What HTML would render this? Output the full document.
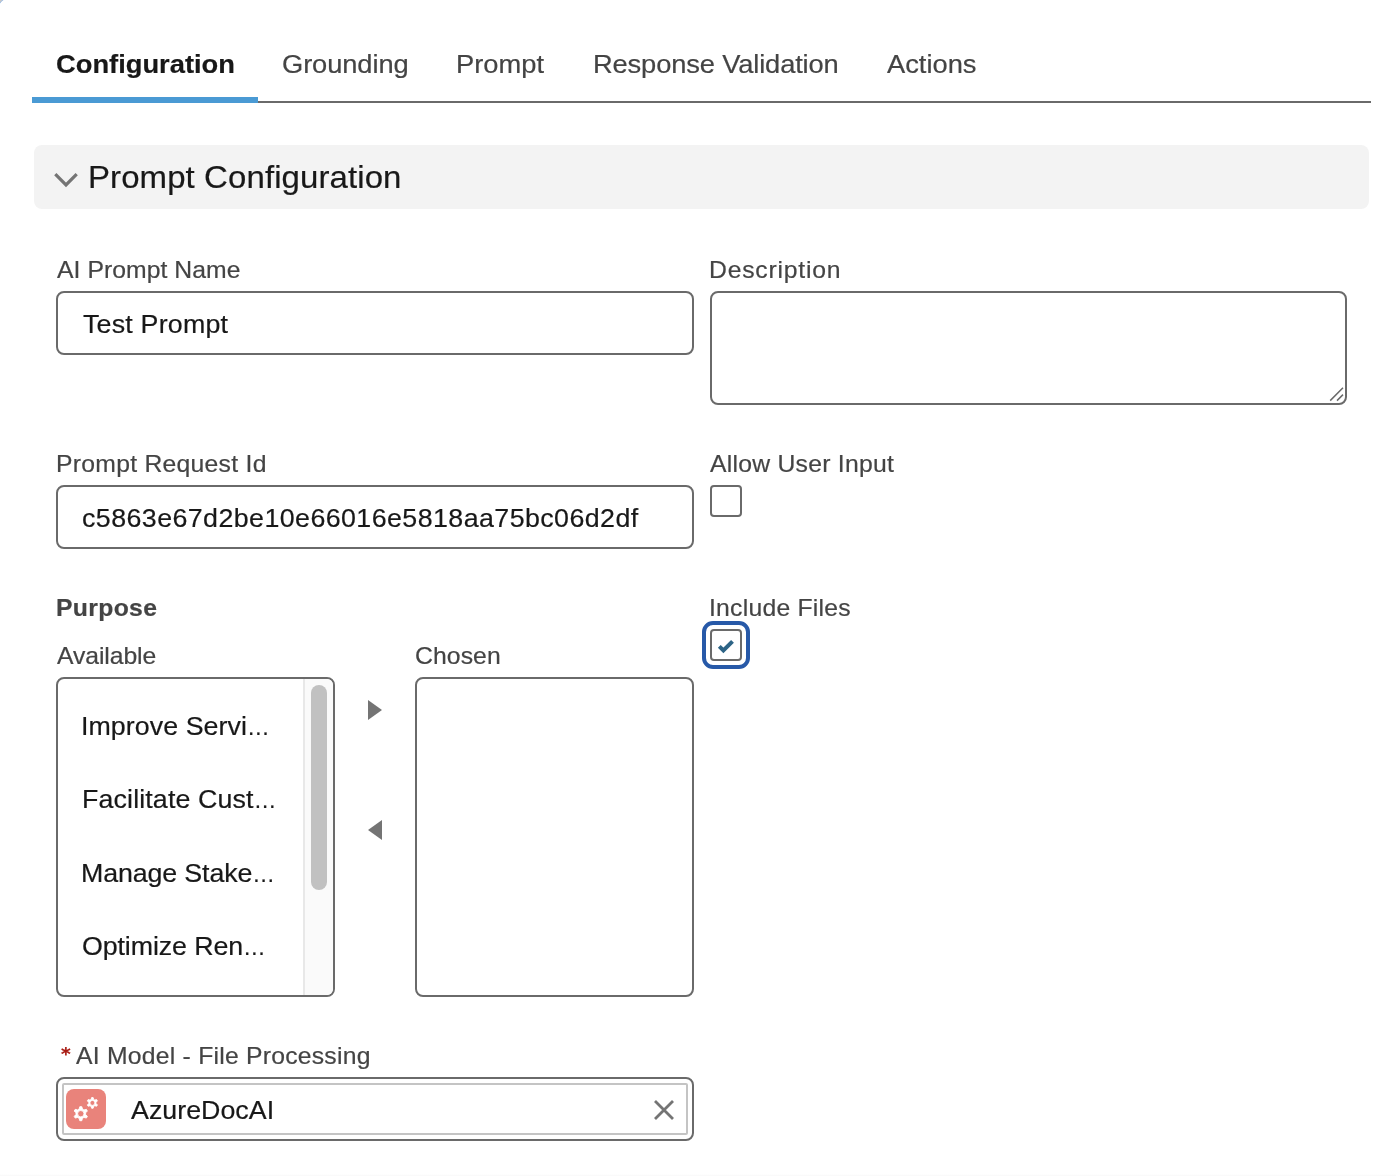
<!DOCTYPE html>
<html lang="en">
<head>
<meta charset="utf-8">
<title>Prompt Configuration</title>
<style>
  * { box-sizing: border-box; margin: 0; padding: 0; }
  html, body { width: 1396px; height: 1176px; background: #fff; overflow: hidden; }
  body { position: relative; font-family: "Liberation Sans", sans-serif; color: #181818; font-size: 26px; }
  .t, .tab a, .section-h h3, .input .v, .listbox li { will-change: transform; transform: scaleX(1.03); transform-origin: 0 50%; -webkit-text-stroke: 0.2px currentColor; }
  .abs { position: absolute; }
  .t { position: absolute; white-space: nowrap; line-height: 1; }

  /* tabs */
  .tabs { position: absolute; left: 32px; top: 26px; width: 1339px; height: 77px; border-bottom: 2px solid #6a6a6a; list-style: none; }
  .tab { position: absolute; top: 0; height: 77px; font-size: 26.5px; color: #444; }
  .tab.active { color: #181818; font-weight: bold; }
  .tab.active::after { content: ""; position: absolute; left: 0; right: 0; bottom: 0; height: 6px; background: #4a9ad4; }
  .tab a { position: absolute; left: 24px; top: 25px; line-height: 1; white-space: nowrap; color: inherit; text-decoration: none; }

  /* section */
  .section-h { position: absolute; left: 34px; top: 145px; width: 1335px; height: 64px; background: #f3f3f3; border-radius: 8px; }
  .section-h h3 { position: absolute; left: 55px; top: 16px; font-size: 32px; font-weight: normal; line-height: 1; white-space: nowrap; color: #181818; }
  .section-h svg { position: absolute; left: 19px; top: 27px; }

  label.t, .lbl { font-size: 24px; color: #444; }
  .input { position: absolute; border: 2px solid #6a6a6a; border-radius: 8px; background: #fff; }
  .input .v { position: absolute; left: 24px; top: 18px; font-size: 26px; line-height: 1; white-space: nowrap; color: #181818; }

  .cb { position: absolute; width: 32px; height: 32px; border: 2px solid #6a6a6a; border-radius: 4px; background: #fff; }
  .ring { position: absolute; width: 48px; height: 48px; border: 4px solid #2759a8; border-radius: 11px; }

  .listbox { position: absolute; border: 2px solid #6a6a6a; border-radius: 8px; background: #fff; overflow: hidden; }
  .listbox ul { list-style: none; }
  .listbox li { position: absolute; left: 24px; font-size: 26px; line-height: 1; white-space: nowrap; color: #181818; }
  .el { font-size: 22px; letter-spacing: 0; }
  .sb-track { position: absolute; right: 0; top: 0; bottom: 0; width: 30px; background: #fafafa; border-left: 2px solid #e8e8e8; }
  .sb-thumb { position: absolute; left: 6px; top: 6px; width: 16px; height: 205px; border-radius: 8px; background: #c1c1c1; }
</style>
</head>
<body>

<ul class="tabs" role="tablist">
  <li class="tab active" style="left:0;width:226px" role="tab"><a id="t1" style="letter-spacing:0.00px">Configuration</a></li>
  <li class="tab" style="left:226px;width:174px" role="tab"><a id="t2" style="letter-spacing:-0.10px">Grounding</a></li>
  <li class="tab" style="left:400px;width:137px" role="tab"><a id="t3" style="letter-spacing:0.00px">Prompt</a></li>
  <li class="tab" style="left:537px;width:293px" role="tab"><a id="t4" style="letter-spacing:-0.14px">Response Validation</a></li>
  <li class="tab" style="left:830px;width:140px" role="tab"><a id="t5" style="letter-spacing:0.00px;left:24.8px">Actions</a></li>
</ul>

<div class="section-h">
  <svg width="26" height="17" viewBox="0 0 26 17"><polyline points="2.3,2.2 13,12.9 23.7,2.2" fill="none" stroke="#747474" stroke-width="3.2" stroke-linejoin="miter"/></svg>
  <h3 id="sh" style="letter-spacing:0.10px;left:54.3px">Prompt Configuration</h3>
</div>

<!-- row 1 -->
<label class="t" id="l1" style="letter-spacing:0.05px;left:57.2px;top:258px">AI Prompt Name</label>
<div class="input" style="left:56px;top:291px;width:638px;height:64px"><span class="v" id="v1" style="letter-spacing:0.20px;left:25px">Test Prompt</span></div>

<label class="t" id="l2" style="letter-spacing:0.77px;left:708.7px;top:258px">Description</label>
<div class="input" style="left:710px;top:291px;width:637px;height:114px">
  <svg class="abs" style="right:-2px;bottom:-2px" width="22" height="22" viewBox="0 0 22 22"><path d="M5.2 17.6 L18 4.8 M12 17.6 L18 11.6" stroke="#6a6a6a" stroke-width="1.5" fill="none"/></svg>
</div>

<!-- row 2 -->
<label class="t" id="l3" style="letter-spacing:0.26px;left:55.6px;top:452px">Prompt Request Id</label>
<div class="input" style="left:56px;top:485px;width:638px;height:64px"><span class="v" id="v2" style="letter-spacing:0.42px">c5863e67d2be10e66016e5818aa75bc06d2df</span></div>

<label class="t" id="l4" style="letter-spacing:0.25px;left:710.3px;top:452px">Allow User Input</label>
<span class="cb" style="left:710px;top:485px"></span>

<!-- row 3 -->
<span class="t lbl" id="l5" style="letter-spacing:0.33px;left:55.6px;top:596px;font-weight:bold">Purpose</span>
<span class="t lbl" id="l6" style="letter-spacing:-0.08px;left:57.2px;top:644px">Available</span>
<span class="t lbl" id="l7" style="letter-spacing:0.10px;left:415.1px;top:644px">Chosen</span>

<div class="listbox" style="left:56px;top:677px;width:279px;height:320px">
 <ul role="listbox">
  <li id="o1" style="top:34px;left:22.9px;letter-spacing:0.06px">Improve Servi<span class="el">…</span></li>
  <li id="o2" style="top:107px;left:23.6px;letter-spacing:0.13px">Facilitate Cust<span class="el">…</span></li>
  <li id="o3" style="top:181px;left:23.3px;letter-spacing:-0.12px">Manage Stake<span class="el">…</span></li>
  <li id="o4" style="top:254px;left:23.9px;letter-spacing:-0.10px">Optimize Ren<span class="el">…</span></li>
 </ul>
  <div class="sb-track"><div class="sb-thumb"></div></div>
</div>

<svg class="abs" style="left:368px;top:700px" width="14" height="20" viewBox="0 0 14 20"><polygon points="0,0 14,10 0,20" fill="#747474"/></svg>
<svg class="abs" style="left:368px;top:820px" width="14" height="20" viewBox="0 0 14 20"><polygon points="14,0 0,10 14,20" fill="#747474"/></svg>

<div class="listbox" style="left:415px;top:677px;width:279px;height:320px"><ul role="listbox"></ul></div>

<label class="t" id="l8" style="letter-spacing:0.23px;left:709.2px;top:596px">Include Files</label>
<span class="ring" style="left:702px;top:621px"></span>
<span class="cb" style="left:710px;top:629px">
  <svg class="abs" style="left:-2px;top:-2px" width="32" height="32" viewBox="0 0 32 32"><polyline points="9.3,17.3 13.4,21.4 22.5,12.3" fill="none" stroke="#2d6486" stroke-width="4"/></svg>
</span>

<!-- row 4 -->
<abbr class="t" title="required" style="left:60.7px;top:1044.6px;font-family:'DejaVu Sans',sans-serif;font-weight:bold;font-size:18px;color:#a81a12;text-decoration:none" id="star">*</abbr>
<label class="t" id="l9" style="letter-spacing:0.23px;left:76.3px;top:1044px">AI Model - File Processing</label>
<div class="input" style="left:56px;top:1077px;width:638px;height:64px">
  <div class="abs" style="left:4px;top:4px;width:626px;height:52px;border:2px solid #c4c4c4;border-radius:2px"></div>
  <svg class="abs" style="left:8px;top:10px" width="40" height="40" viewBox="0 0 40 40"><rect width="40" height="40" rx="8" fill="#e9837b"/><path d="M16.48 20.10 L15.79 17.67 L13.81 17.67 L13.12 20.10 L11.65 20.95 L9.21 20.33 L8.22 22.04 L9.97 23.85 L9.97 25.55 L8.22 27.36 L9.21 29.07 L11.65 28.45 L13.12 29.30 L13.81 31.73 L15.79 31.73 L16.48 29.30 L17.95 28.45 L20.39 29.07 L21.38 27.36 L19.63 25.55 L19.63 23.85 L21.38 22.04 L20.39 20.33 L17.95 20.95 Z M11.60 24.70 a3.2 3.2 0 1 0 6.4 0 a3.2 3.2 0 1 0 -6.4 0 Z M27.67 10.42 L27.15 8.55 L25.65 8.55 L25.13 10.42 L24.02 11.07 L22.14 10.58 L21.39 11.88 L22.76 13.26 L22.76 14.54 L21.39 15.92 L22.14 17.22 L24.02 16.73 L25.13 17.38 L25.65 19.25 L27.15 19.25 L27.67 17.38 L28.78 16.73 L30.66 17.22 L31.41 15.92 L30.04 14.54 L30.04 13.26 L31.41 11.88 L30.66 10.58 L28.78 11.07 Z M23.90 13.90 a2.5 2.5 0 1 0 5.0 0 a2.5 2.5 0 1 0 -5.0 0 Z" fill="#fff" fill-rule="evenodd" stroke="#fff" stroke-width="0.9" stroke-linejoin="round"/></svg>
  <span class="t" id="v3" style="letter-spacing:0.02px;left:72.7px;top:18px;font-size:26px;color:#181818">AzureDocAI</span>
  <svg class="abs" style="left:596px;top:21px" width="20" height="20" viewBox="0 0 20 20"><path d="M1 1 L19 19 M19 1 L1 19" stroke="#747474" stroke-width="2.8" fill="none"/></svg>
</div>


<svg class="abs" style="left:0;top:0" width="5" height="5" viewBox="0 0 5 5" aria-hidden="true"><path d="M0 0 H2.9 L0 2.9 Z" fill="#cbc8c5"/><path d="M3.3 0 Q0.7 0.7 0 3.3" fill="none" stroke="#9dbde6" stroke-width="0.9"/></svg>
<div class="abs" style="left:0;top:1174px;width:1396px;height:2px;background:linear-gradient(#fff,#f8f8f8)"></div>
</body>
</html>
